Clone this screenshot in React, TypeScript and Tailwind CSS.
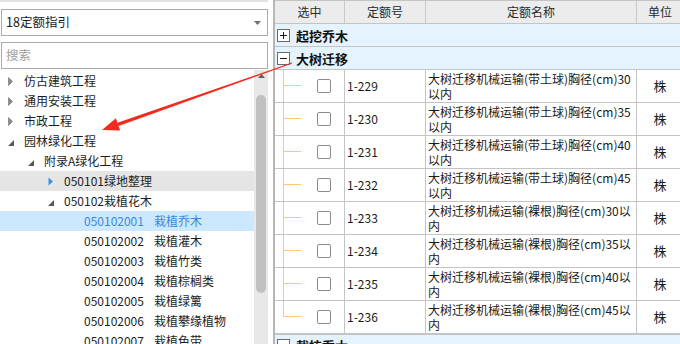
import React from 'react';

type TreeNode = {
  kind: 'collapsed' | 'expanded' | 'blue' | 'leaf';
  level: 0 | 1 | 2 | 3;
  label: string;
  name?: string;
  bg?: 'gray' | 'blue';
};

const tree: TreeNode[] = [
  { kind: 'collapsed', level: 0, label: '仿古建筑工程' },
  { kind: 'collapsed', level: 0, label: '通用安装工程' },
  { kind: 'collapsed', level: 0, label: '市政工程' },
  { kind: 'expanded', level: 0, label: '园林绿化工程' },
  { kind: 'expanded', level: 1, label: '附录A绿化工程' },
  { kind: 'blue', level: 2, label: '050101绿地整理', bg: 'gray' },
  { kind: 'expanded', level: 2, label: '050102栽植花木' },
  { kind: 'leaf', level: 3, label: '050102001', name: '栽植乔木', bg: 'blue' },
  { kind: 'leaf', level: 3, label: '050102002', name: '栽植灌木' },
  { kind: 'leaf', level: 3, label: '050102003', name: '栽植竹类' },
  { kind: 'leaf', level: 3, label: '050102004', name: '栽植棕榈类' },
  { kind: 'leaf', level: 3, label: '050102005', name: '栽植绿篱' },
  { kind: 'leaf', level: 3, label: '050102006', name: '栽植攀缘植物' },
  { kind: 'leaf', level: 3, label: '050102007', name: '栽植色带' },
];

const padByLevel: Record<number, string> = {
  0: 'pl-[8px]',
  1: 'pl-[28px]',
  2: 'pl-[48px]',
  3: 'pl-[84px]',
};

function TreeIcon({ kind }: { kind: TreeNode['kind'] }) {
  if (kind === 'collapsed') {
    return (
      <svg width="6" height="9" viewBox="0 0 6 9" className="shrink-0">
        <path d="M0.5 0.5 L4.5 4.5 L0.5 8.5 Z" fill="#8a8a8a" stroke="#6e6e6e" strokeWidth="0.6" />
      </svg>
    );
  }
  if (kind === 'blue') {
    return (
      <svg width="6" height="9" viewBox="0 0 6 9" className="shrink-0">
        <path d="M0.5 0.5 L5 4.5 L0.5 8.5 Z" fill="#3b8fe4" />
      </svg>
    );
  }
  return (
    <svg width="6" height="9" viewBox="0 0 6 9" className="shrink-0 translate-y-[2px]">
      <path d="M6 1 L6 7 L0 7 Z" fill="#595959" />
    </svg>
  );
}

function TreeRow({ node }: { node: TreeNode }) {
  const bg = node.bg === 'gray' ? 'bg-[#e5e5e5]' : node.bg === 'blue' ? 'bg-[#cce8ff]' : '';
  const color = node.bg === 'blue' ? 'text-[#3a86dc]' : 'text-[#1e1e1e]';
  return (
    <div className={`flex h-[20px] shrink-0 items-center whitespace-nowrap ${padByLevel[node.level]} ${bg} ${color}`}>
      {node.kind !== 'leaf' && <TreeIcon kind={node.kind} />}
      {node.kind === 'leaf' ? (
        <>
          <span>{node.label}</span>
          <span className="ml-[10px]">{node.name}</span>
        </>
      ) : (
        <span className="ml-[10px]">{node.label}</span>
      )}
    </div>
  );
}

const rows = [
  { no: '1-229', l1: '大树迁移机械运输(带土球)胸径(cm)30', l2: '以内' },
  { no: '1-230', l1: '大树迁移机械运输(带土球)胸径(cm)35', l2: '以内' },
  { no: '1-231', l1: '大树迁移机械运输(带土球)胸径(cm)40', l2: '以内' },
  { no: '1-232', l1: '大树迁移机械运输(带土球)胸径(cm)45', l2: '以内' },
  { no: '1-233', l1: '大树迁移机械运输(裸根)胸径(cm)30以', l2: '内' },
  { no: '1-234', l1: '大树迁移机械运输(裸根)胸径(cm)35以', l2: '内' },
  { no: '1-235', l1: '大树迁移机械运输(裸根)胸径(cm)40以', l2: '内' },
  { no: '1-236', l1: '大树迁移机械运输(裸根)胸径(cm)45以', l2: '内' },
];

function BoxIcon({ plus }: { plus: boolean }) {
  return (
    <svg width="13" height="13" viewBox="0 0 13 13" className="shrink-0">
      <rect x="0.5" y="0.5" width="12" height="12" fill="#ffffff" stroke="#6a6a6a" />
      <line x1="3" y1="6.5" x2="10" y2="6.5" stroke="#1a1a1a" strokeWidth="1" />
      {plus && <line x1="6.5" y1="3" x2="6.5" y2="10" stroke="#1a1a1a" strokeWidth="1" />}
    </svg>
  );
}

function GroupRow({ label, plus, extra = '' }: { label: string; plus: boolean; extra?: string }) {
  return (
    <div className={`flex h-[23px] shrink-0 items-center border-b border-[#c4c4c4] bg-[#e5f3fe] pl-[2px] ${extra}`}>
      <BoxIcon plus={plus} />
      <span className="ml-[6px] text-[13px] font-bold leading-[23px] text-[#111]">{label}</span>
    </div>
  );
}

function TreeLines({ last }: { last: boolean }) {
  return (
    <div className="flex h-full w-[30px] shrink-0 self-stretch">
      <div className="w-[8px] shrink-0" />
      <div className={`w-[1px] shrink-0 bg-[#ffc77d] ${last ? 'h-[16px]' : 'h-full'}`} />
      <div className="mt-[15px] h-[1px] w-[17px] shrink-0 bg-[#ffc77d]" />
    </div>
  );
}

export default function App() {
  const tip = [102, 130];
  const start = [292, 63];
  const dx = start[0] - tip[0];
  const dy = start[1] - tip[1];
  const len = Math.hypot(dx, dy);
  const ux = dx / len;
  const uy = dy / len;
  const px = -uy;
  const py = ux;
  const headLen = 17;
  const headW = 6.5;
  const bc = [tip[0] + ux * headLen, tip[1] + uy * headLen];
  const head = `${tip[0]},${tip[1]} ${bc[0] + px * headW},${bc[1] + py * headW} ${bc[0] - px * headW},${bc[1] - py * headW}`;
  const sw0 = 1.8;
  const sw1 = 0.4;
  const shaft = `${bc[0] + px * sw0},${bc[1] + py * sw0} ${start[0] + px * sw1},${start[1] + py * sw1} ${start[0] - px * sw1},${start[1] - py * sw1} ${bc[0] - px * sw0},${bc[1] - py * sw0}`;

  return (
    <div className="relative flex h-[344px] w-[680px] overflow-hidden bg-white font-['Microsoft_YaHei','Noto_Sans_CJK_SC',sans-serif] text-[12px]">
      {/* Left panel */}
      <div className="flex w-[268px] shrink-0 flex-col">
        <div className="h-[2px] bg-[#e2e2e2]" />
        <div className="ml-[1px] mt-[7px] flex h-[27px] w-[267px] items-center justify-between border border-[#ababab] pl-[4px] pr-[6px] text-[#1a1a1a]">
          <span className="text-[12.5px]">18定额指引</span>
          <svg width="7" height="4" viewBox="0 0 7 4">
            <path d="M0 0 L7 0 L3.5 4 Z" fill="#6e6e6e" />
          </svg>
        </div>
        <div className="ml-[1px] mt-[6px] flex h-[27px] w-[267px] items-center border border-[#ababab] pl-[4px] text-[#a0a0a0]">
          <span className="text-[12.5px]">搜索</span>
        </div>
        <div className="mt-[1px] flex min-h-0 flex-1">
          <div className="flex w-[254px] flex-col overflow-hidden pt-[1px]">
            {tree.map((n, i) => (
              <TreeRow key={i} node={n} />
            ))}
          </div>
          <div className="flex w-[14px] flex-col items-center bg-[#e8e8e8]">
            <svg width="7" height="4" viewBox="0 0 7 4" className="mt-[4px]">
              <path d="M0 4 L7 4 L3.5 0 Z" fill="#606060" />
            </svg>
            <div className="mt-[17px] h-[198px] w-[10px] rounded-full bg-[#c1c1c1]" />
          </div>
        </div>
      </div>

      {/* gap + separator */}
      <div className="w-[5px] shrink-0" />
      <div className="w-[2px] shrink-0 bg-[#b6b6b6]" />

      {/* Right table */}
      <div className="flex w-[405px] shrink-0 flex-col overflow-hidden text-[#1a1a1a]">
        <div className="flex h-[24px] shrink-0 border-b border-t border-[#c4c4c4] bg-[#ececec] text-[#2a2a2a]">
          <div className="flex w-[70px] shrink-0 items-center justify-center border-r border-[#c8c8c8]">选中</div>
          <div className="flex w-[81px] shrink-0 items-center justify-center border-r border-[#c8c8c8]">定额号</div>
          <div className="flex w-[211px] shrink-0 items-center justify-center border-r border-[#c8c8c8]">定额名称</div>
          <div className="flex w-[46px] shrink-0 items-center justify-center">单位</div>
        </div>
        <GroupRow label="起挖乔木" plus />
        <GroupRow label="大树迁移" plus={false} />
        {rows.map((r, i) => (
          <div key={r.no} className="flex h-[33px] shrink-0 border-b border-[#c4c4c4]">
            <div className="flex w-[70px] shrink-0 items-center border-r border-[#c4c4c4]">
              <TreeLines last={i === rows.length - 1} />
              <div className="ml-[12px] h-[14px] w-[14px] rounded-[2px] border border-[#8c8c8c] bg-white" />
            </div>
            <div className="flex w-[81px] shrink-0 items-center border-r border-[#c4c4c4] pl-[2px]">{r.no}</div>
            <div className="flex w-[211px] shrink-0 flex-col justify-center border-r border-[#c4c4c4] pl-[2px] leading-[15px]">
              <span className="whitespace-nowrap">{r.l1}</span>
              <span className="whitespace-nowrap">{r.l2}</span>
            </div>
            <div className="flex w-[46px] shrink-0 items-center justify-center text-[13px]">株</div>
          </div>
        ))}
        <GroupRow label="栽植乔木" plus={false} extra="border-t border-[#c4c4c4]" />
      </div>

      {/* red annotation arrow */}
      <svg className="pointer-events-none absolute left-0 top-0" width="680" height="344" viewBox="0 0 680 344">
        <polygon points={shaft} fill="#f52a1e" />
        <polygon points={head} fill="#f52a1e" />
      </svg>
    </div>
  );
}
